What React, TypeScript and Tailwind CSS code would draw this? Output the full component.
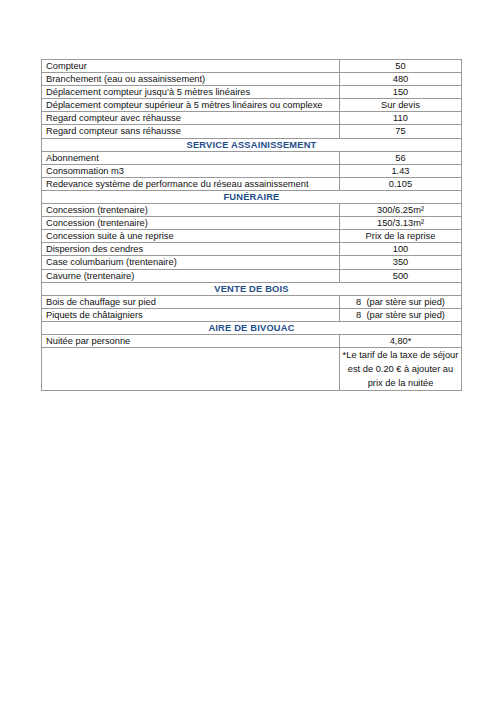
type Row =
  | { kind: 'item'; label: string; value: string[] }
  | { kind: 'section'; title: string }

const rows: Row[] = [
  { kind: 'item', label: 'Compteur', value: ['50'] },
  { kind: 'item', label: 'Branchement (eau ou assainissement)', value: ['480'] },
  { kind: 'item', label: 'Déplacement compteur jusqu’à 5 mètres linéaires', value: ['150'] },
  { kind: 'item', label: 'Déplacement compteur supérieur à 5 mètres linéaires ou complexe', value: ['Sur devis'] },
  { kind: 'item', label: 'Regard compteur avec réhausse', value: ['110'] },
  { kind: 'item', label: 'Regard compteur sans réhausse', value: ['75'] },
  { kind: 'section', title: 'SERVICE ASSAINISSEMENT' },
  { kind: 'item', label: 'Abonnement', value: ['56'] },
  { kind: 'item', label: 'Consommation m3', value: ['1.43'] },
  { kind: 'item', label: 'Redevance système de performance du réseau assainissement', value: ['0.105'] },
  { kind: 'section', title: 'FUNÉRAIRE' },
  { kind: 'item', label: 'Concession (trentenaire)', value: ['300/6.25m²'] },
  { kind: 'item', label: 'Concession (trentenaire)', value: ['150/3.13m²'] },
  { kind: 'item', label: 'Concession suite à une reprise', value: ['Prix de la reprise'] },
  { kind: 'item', label: 'Dispersion des cendres', value: ['100'] },
  { kind: 'item', label: 'Case columbarium (trentenaire)', value: ['350'] },
  { kind: 'item', label: 'Cavurne (trentenaire)', value: ['500'] },
  { kind: 'section', title: 'VENTE DE BOIS' },
  { kind: 'item', label: 'Bois de chauffage sur pied', value: ['8  (par stère sur pied)'] },
  { kind: 'item', label: 'Piquets de châtaigniers', value: ['8  (par stère sur pied)'] },
  { kind: 'section', title: 'AIRE DE BIVOUAC' },
  { kind: 'item', label: 'Nuitée par personne', value: ['4,80*'] },
  {
    kind: 'item',
    label: '',
    value: ['*Le tarif de la taxe de séjour', 'est de 0.20 € à ajouter au', 'prix de la nuitée'],
  },
]

export default function App() {
  return (
    <div className="min-h-[707px] w-[500px] bg-white pt-[59px] pl-[41px] font-['Liberation_Sans',sans-serif] text-[9.3px] text-[#111]">
      <table className="w-[421px] border-collapse">
        <colgroup>
          <col className="w-[298px]" />
          <col />
        </colgroup>
        <tbody>
          {rows.map((r, i) =>
            r.kind === 'section' ? (
              <tr key={i}>
                <td
                  colSpan={2}
                  className="border border-[#9a9a9a] p-0 text-center font-bold leading-[12.1px] tracking-[0.2px] text-[#1f4e8c]"
                >
                  {r.title}
                </td>
              </tr>
            ) : (
              <tr key={i}>
                <td className="border border-[#9a9a9a] p-0 pl-[4px] align-middle leading-[12.1px]">{r.label}</td>
                <td
                  className={
                    r.value.length > 1
                      ? 'border border-[#9a9a9a] p-0 text-center align-middle leading-[14px]'
                      : 'border border-[#9a9a9a] p-0 text-center align-middle leading-[12.1px]'
                  }
                >
                  {r.value.map((v, j) => (
                    <div key={j} className="whitespace-pre">
                      {v}
                    </div>
                  ))}
                </td>
              </tr>
            ),
          )}
        </tbody>
      </table>
    </div>
  )
}
